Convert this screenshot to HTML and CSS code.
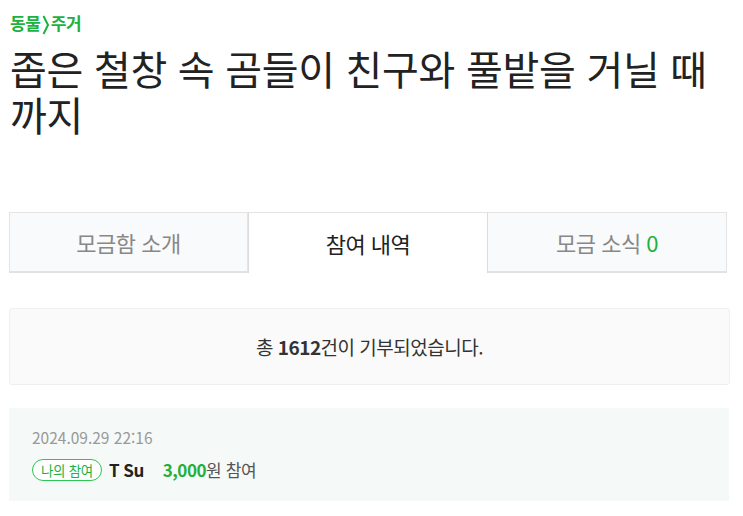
FILE: index.html
```html
<!DOCTYPE html>
<html lang="ko">
<head>
<meta charset="utf-8">
<link rel="stylesheet" href="styles.css">
</head>
<body>
<div class="page">
  <div class="crumb"><span>동물</span><svg class="sep" width="10" height="28" viewBox="0 0 10 28"><polyline points="2.5,7 7,16 2.5,25" fill="none" stroke="#1db13f" stroke-width="2"/></svg><span>주거</span></div>
  <h1 class="title">좁은 철창 속 곰들이 친구와 풀밭을 거닐 때 까지</h1>
  <div class="tabs">
    <div class="tab"><span>모금함 소개</span></div>
    <div class="tab active"><span>참여 내역</span></div>
    <div class="tab"><span>모금 소식 <span class="green">0</span></span></div>
  </div>
  <div class="summary"><span>총 <b>1612</b>건이 기부되었습니다.</span></div>
  <div class="entry">
    <div class="date">2024.09.29 22:16</div>
    <div class="line">
      <span class="badge">나의 참여</span>
      <span class="name">T Su</span>
      <span class="amount"><b>3,000</b>원 참여</span>
    </div>
  </div>
</div>
</body>
</html>
```

FILE: styles.css
```css
* { box-sizing: border-box; }
html, body { margin: 0; padding: 0; background: #fff; }
body {
  font-family: "Noto Sans CJK KR", "Noto Sans", sans-serif;
  color: #222;
}
.page { padding: 9px 13px 0 9px; }
.crumb {
  display: flex;
  align-items: flex-start;
  color: #1db13f;
  font-weight: 700;
  font-size: 17px;
  line-height: 28px;
  height: 28px;
  padding-left: 1px;
  letter-spacing: -0.3px;
}
.sep { display: block; flex: none; }
.title {
  margin: 8px 0 0 1px;
  font-size: 40px;
  font-weight: 400;
  line-height: 46px;
  letter-spacing: -0.3px;
  color: #222;
}
.tabs {
  margin-top: 75px;
  display: grid;
  grid-template-columns: 239px 240px 239px;
  width: 718px;
}
.tab {
  height: 61px;
  display: flex;
  align-items: center;
  justify-content: center;
  font-size: 22px;
  color: #888;
  background: #f9fafc;
  border: 1px solid #e4e4e4;
  border-bottom: 2px solid #e2e2e2;
  letter-spacing: -0.5px;
}
.tab + .tab { border-left: none; }
.tab.active {
  background: #fff;
  color: #222;
  border-left: 1px solid #dcdcdc;
  border-right: 1px solid #dcdcdc;
  border-bottom: none;
}
.tab.active + .tab { border-left: none; }
.green { color: #1db13f; }
.summary {
  margin-top: 35px;
  width: 721px;
  height: 77px;
  background: #fafafa;
  border: 1px solid #efefef;
  border-radius: 3px;
  display: flex;
  align-items: center;
  justify-content: center;
  font-size: 19px;
  color: #333;
  letter-spacing: -0.5px;
}
.summary b { font-weight: 700; }
.entry {
  margin-top: 23px;
  width: 720px;
  height: 93px;
  background: #f5f9f7;
  padding: 18px 0 0 23px;
}
.date {
  font-size: 15.5px;
  color: #999;
  line-height: 22px;
}
.line {
  margin-top: 9px;
  display: flex;
  align-items: center;
}
.badge {
  display: inline-flex;
  align-items: center;
  height: 22px;
  padding: 0 8px;
  border: 1px solid #2dc653;
  border-radius: 11px;
  color: #1db13f;
  font-size: 13.5px;
  background: #fff;
  letter-spacing: -0.3px;
}
.name {
  margin-left: 7px;
  font-size: 17px;
  font-weight: 700;
  color: #222;
  letter-spacing: -0.5px;
}
.amount {
  margin-left: 19px;
  font-size: 17px;
  color: #555;
  letter-spacing: -0.3px;
}
.amount b { color: #1db13f; font-weight: 700; letter-spacing: -0.5px; }
```
